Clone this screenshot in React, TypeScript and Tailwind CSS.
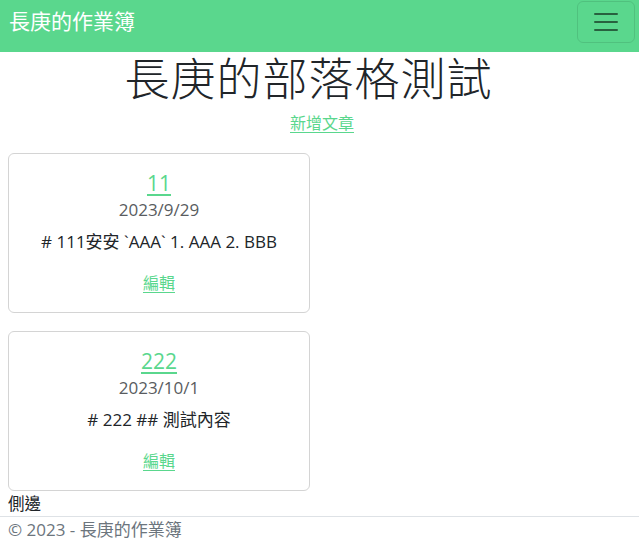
import React from "react";

const font = { fontFamily: '"Open Sans", "Noto Sans", "Noto Sans CJK TC", sans-serif' };

function Card({ title, date, body }: { title: string; date: string; body: string }) {
  return (
    <div className="w-[302px] h-[160px] border border-[#d4d4d4] rounded-[6px] flex flex-col items-center pt-[17px]">
      <a href="#" className="text-[21px] leading-[24px] text-[#5ad78d] underline underline-offset-[3px]">{title}</a>
      <div className="text-[17px] leading-[24px] text-[#595c60] mt-[3px]">{date}</div>
      <div className="text-[17px] leading-[24px] text-[#212529] mt-[8px]">{body}</div>
      <a href="#" className="text-[16px] leading-[24px] text-[#5ad78d] underline underline-offset-[3px] mt-[17px]">編輯</a>
    </div>
  );
}

export default function App() {
  return (
    <div className="w-[639px] h-[559px] bg-white text-[#212529]" style={font}>
      <nav className="h-[52px] bg-[#5ad78d] flex items-start justify-between pl-[9px] pr-[4px]">
        <span className="text-white text-[21px] leading-[30px] mt-[6px]">長庚的作業簿</span>
        <button className="w-[58px] h-[42px] mt-[1px] border border-[rgba(0,0,0,0.1)] rounded-[6px] flex items-center justify-center">
          <svg width="30" height="30" viewBox="0 0 30 30">
            <path d="M4 7h22M4 15h22M4 23h22" stroke="rgba(0,0,0,0.55)" strokeWidth="2" strokeLinecap="round" />
          </svg>
        </button>
      </nav>
      <div className="flex flex-col items-center">
        <h1 className="text-[45px] leading-[54px] font-light tracking-[1px] pr-[22px]">長庚的部落格測試</h1>
        <a href="#" className="mt-[5px] text-[16px] leading-[24px] text-[#5ad78d] underline underline-offset-[3px] pl-[5px]">新增文章</a>
      </div>
      <div className="flex flex-col gap-[18px] px-[8px] mt-[18px]">
        <Card title="11" date="2023/9/29" body="# 111安安 `AAA` 1. AAA 2. BBB" />
        <Card title="222" date="2023/10/1" body="# 222 ## 測試內容" />
      </div>
      <div className="px-[8px] text-[16.5px] leading-[24px] mt-[1px]">側邊</div>
      <div className="border-t border-[#dee2e6] px-[8px] pt-[1px] text-[17px] leading-[24px] text-[#6c757d]">© 2023 - 長庚的作業簿</div>
    </div>
  );
}
